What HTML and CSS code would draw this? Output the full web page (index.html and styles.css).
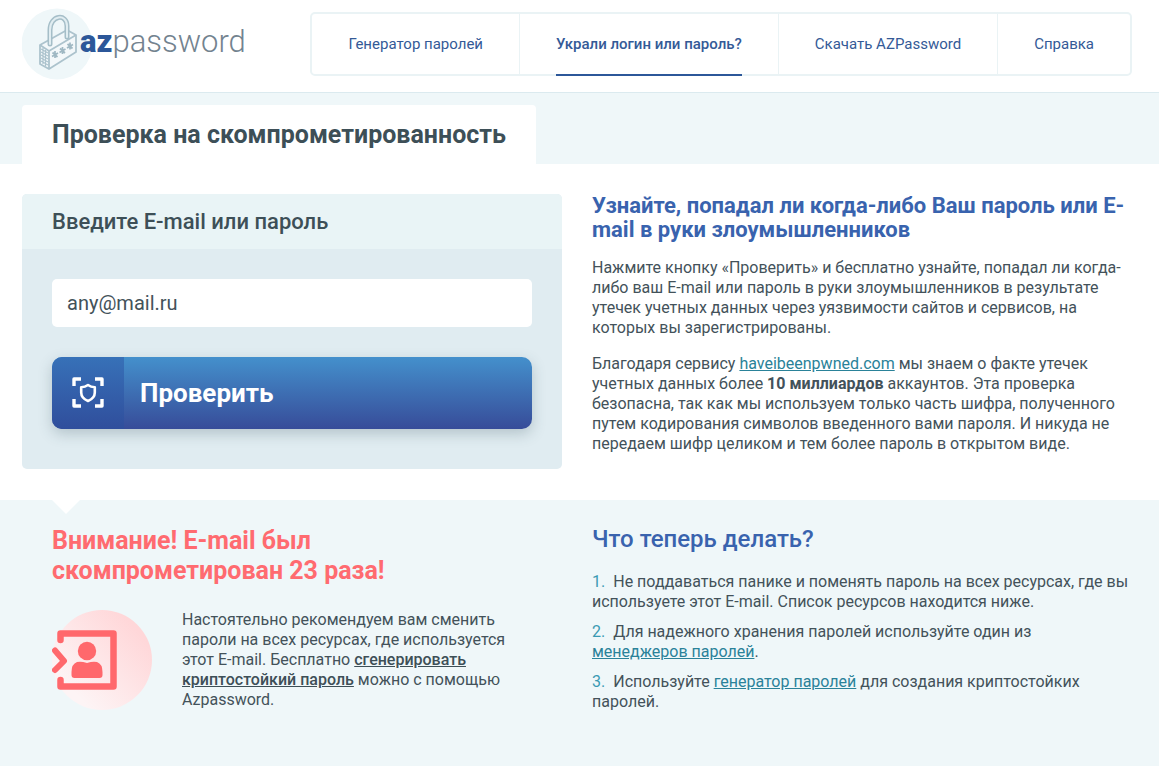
FILE: index.html
```html
<!DOCTYPE html>
<html lang="ru">
<head>
<meta charset="utf-8">
<meta name="viewport" content="width=device-width, initial-scale=1">
<title>AZPassword — проверка на скомпрометированность</title>
<link rel="stylesheet" href="styles.css">
</head>
<body>
<header class="header">
  <div class="container header-row">
    <a class="logo" href="#" aria-label="azpassword">
      <svg class="logo-mark" viewBox="0 0 72 72" aria-hidden="true">
        <circle cx="35" cy="36" r="35.500" fill="#eff7f9"/>
        <path d="M18 37 45 22 54 27 54 44 27 61 18 56Z" fill="#f3f8fa" stroke="#acc3cd" stroke-width="1.800" stroke-linejoin="round"/>
        <path d="M18 37 27 43 54 27M27 43V61" fill="none" stroke="#acc3cd" stroke-width="1.800"/>
        <path d="M19 41 26 45M19 44 26 48M19 47 26 51M19 50 26 54M19 53 26 57M21 40V56M23.500 42V58" stroke="#acc3cd" stroke-width="1.200"/>
        <path d="M28 36V22C28 7 45 5 45 18V29" fill="none" stroke="#a5bec8" stroke-width="5" stroke-linecap="round"/>
        <path d="M28 36V22C28 7 45 5 45 18V29" fill="none" stroke="#e1edf1" stroke-width="2" stroke-linecap="round"/>
        <g stroke="#9fb8c3" stroke-width="1.700">
          <path d="M33 43V50M30 48.500 36 45M30.500 44.500 35.500 49"/>
          <path d="M40.500 39V46M37.500 44.500 43.500 41M38 40.500 43 45"/>
          <path d="M48 34.500V41.500M45 40 51 36.500M45.500 36 50.500 40.500"/>
        </g>
      </svg>
      <span class="logo-text"><b>az</b>password</span>
    </a>
    <nav class="nav">
      <div class="nav-item"><a href="#">Генератор паролей</a></div>
      <div class="nav-item"><a class="current" href="#" aria-current="page">Украли логин или пароль?</a></div>
      <div class="nav-item"><a href="#">Скачать AZPassword</a></div>
      <div class="nav-item"><a href="#">Справка</a></div>
    </nav>
  </div>
</header>
<main>
  <div class="title-band">
    <div class="container"><h1 class="title">Проверка на скомпрометированность</h1></div>
  </div>
  <section class="container columns check">
    <form class="panel">
      <label class="panel-title" for="query">Введите E-mail или пароль</label>
      <div class="panel-body">
        <input class="field" id="query" type="text" value="any@mail.ru">
        <button class="submit" type="button">
          <span class="submit-icon">
            <svg width="32" height="32" viewBox="0 0 32 32" fill="none" stroke="#fff" aria-hidden="true">
              <path d="M2 9V2H9M23 2H30V9M30 22V29H23M9 29H2V22" stroke-width="3.400" stroke-linejoin="round"/>
              <path d="M16 8C14 9.500 11.500 10.200 9.200 10.300V15.500C9.200 19.300 12 22.300 16 24C20 22.300 22.800 19.300 22.800 15.500V10.300C20.500 10.200 18 9.500 16 8Z" stroke-width="2.600" stroke-linejoin="round"/>
            </svg>
          </span>
          <span class="submit-text">Проверить</span>
        </button>
      </div>
    </form>
    <div class="about">
      <h2 class="about-title">Узнайте, попадал ли когда-либо Ваш пароль или E-mail в руки злоумышленников</h2>
      <p>Нажмите кнопку «Проверить» и бесплатно узнайте, попадал ли когда-либо ваш E-mail или пароль в руки злоумышленников в результате утечек учетных данных через уязвимости сайтов и сервисов, на которых вы зарегистрированы.</p>
      <p>Благодаря сервису <a class="link" href="#">haveibeenpwned.com</a> мы знаем о факте утечек учетных данных более <b>10 миллиардов</b> аккаунтов. Эта проверка безопасна, так как мы используем только часть шифра, полученного путем кодирования символов введенного вами пароля. И никуда не передаем шифр целиком и тем более пароль в открытом виде.</p>
    </div>
  </section>
  <section class="result">
    <div class="container columns">
      <div class="warning">
        <h2 class="warning-title">Внимание! E-mail был скомпрометирован 23 раза!</h2>
        <div class="warning-row">
          <svg class="warning-icon" width="102" height="102" viewBox="0 0 102 102" aria-hidden="true">
            <defs><linearGradient id="glow" x1=".2" y1=".8" x2=".85" y2=".2"><stop offset="0" stop-color="#fdf4f5"/><stop offset="1" stop-color="#ffd7d9"/></linearGradient></defs>
            <circle cx="50" cy="50" r="50" fill="url(#glow)"/>
            <g fill="none" stroke="#ff686c" stroke-width="6.500" stroke-linecap="round" stroke-linejoin="round">
              <path d="M8.500 30V23.500H61.500V76.500H8.500V70"/>
              <path d="M3 40.500 12 51 3 60" stroke-width="6"/>
            </g>
            <circle cx="35" cy="41" r="9.200" fill="#ff686c"/>
            <path d="M25 52Q29 51 35 53Q41 51 45 52Q50.500 54 50.500 62V65Q50.500 68 47.500 68H22.500Q19.500 68 19.500 65V62Q19.500 54 25 52Z" fill="#ff686c"/>
          </svg>
          <p>Настоятельно рекомендуем вам сменить пароли на всех ресурсах, где используется этот E-mail. Бесплатно <a class="strong-link" href="#">сгенерировать криптостойкий пароль</a> можно с помощью Azpassword.</p>
        </div>
      </div>
      <div class="advice">
        <h2 class="advice-title">Что теперь делать?</h2>
        <ol class="steps">
          <li>Не поддаваться панике и поменять пароль на всех ресурсах, где вы используете этот E-mail. Список ресурсов находится ниже.</li>
          <li>Для надежного хранения паролей используйте один из <a class="link" href="#">менеджеров паролей</a>.</li>
          <li>Используйте <a class="link" href="#">генератор паролей</a> для создания криптостойких паролей.</li>
        </ol>
      </div>
    </div>
  </section>
</main>
</body>
</html>
```

FILE: styles.css
```css
* { box-sizing: border-box; }
body {
  margin: 0;
  min-height: 100vh;
  display: flex;
  flex-direction: column;
  background: #fff;
  color: #43525a;
  font: 16px/20px Roboto, "Liberation Sans", sans-serif;
}
main { flex: 1; display: flex; flex-direction: column; }
h1, h2, p, ol { margin: 0; }
.container { width: 100%; padding: 0 27px 0 22px; }

.header { border-bottom: 1px solid #dbeaef; }
.header-row { display: flex; justify-content: space-between; align-items: center; padding-top: 8px; padding-bottom: 12px; }
.logo { display: flex; align-items: center; color: #73838f; text-decoration: none; }
.logo-mark { width: 72px; height: 72px; }
.logo-text { margin-left: -14px; padding-bottom: 4px; font-size: 31px; line-height: 40px; font-weight: 300; }
.logo-text b { color: #2c5799; font-weight: 900; }

.nav { display: flex; height: 64px; border: 2px solid #eaf3f5; border-radius: 5px; }
.nav-item { display: flex; padding: 0 36px; border-right: 1px solid #eaf3f5; }
.nav-item:last-child { border-right: 0; }
.nav-item a { margin-bottom: -2px; border-bottom: 2px solid transparent; color: #345a97; font-size: 15px; line-height: 60px; text-decoration: none; }
.nav-item .current { border-color: #2c5799; font-weight: 500; }

.title-band { padding-top: 12px; background: #eff7f9; }
.title { width: fit-content; padding: 10px 30px 9px; border-radius: 4px 4px 0 0; background: #fff; color: #3d4f57; font-size: 25px; line-height: 40px; font-weight: 700; }

.columns { display: grid; grid-template-columns: 1fr 1fr; gap: 30px; }
.check { padding-top: 30px; padding-bottom: 31px; align-items: start; }
.panel { border-radius: 5px; background: #e0ecf1; overflow: hidden; }
.panel-title { display: block; padding: 13px 30px 12px; background: #e9f4f6; color: #3d4f57; font-size: 22px; line-height: 30px; font-weight: 500; }
.panel-body { padding: 30px 30px 40px; }
.field { display: block; width: 100%; height: 48px; padding: 0 15px; border: 0; border-radius: 5px; background: #fff; color: #43525a; font: 20px/24px Roboto, sans-serif; }
.submit { display: flex; width: 100%; height: 72px; margin-top: 30px; padding: 0; border: 0; border-radius: 10px; overflow: hidden; background: linear-gradient(#4490cc, #374c99); box-shadow: 0 5px 14px rgba(50, 80, 90, .25); color: #fff; font: 700 26px/32px Roboto, sans-serif; text-align: left; }
.submit-icon { display: flex; width: 72px; height: 72px; align-items: center; justify-content: center; background: linear-gradient(#3771b8, #304e9c); }
.submit-text { padding: 20px 16px; }

.about-title { color: #3963ae; font-size: 22px; line-height: 24px; font-weight: 700; }
.about p { margin-top: 16px; }
.about b { font-weight: 700; }
.link { color: #2a8299; }

.result { position: relative; flex: 1; padding: 24px 0 52px; background: #eff7f9; }
.result::before { content: ""; position: absolute; left: 52px; top: 0; border: 14px solid transparent; border-top-color: #fff; border-bottom: 0; }
.warning { padding: 2px 30px 0; }
.warning-title { max-width: 400px; color: #ff6b70; font-size: 25px; line-height: 30px; font-weight: 700; }
.warning-row { display: flex; gap: 28px; margin-top: 24px; align-items: flex-start; }
.warning-icon { flex: none; }
.strong-link { color: #3d4f57; font-weight: 500; }
.advice-title { color: #3963ae; font-size: 24px; line-height: 30px; font-weight: 500; }
.steps { display: grid; gap: 10px; margin-top: 18px; padding: 0 3px 0 0; list-style: none; counter-reset: step; }
.steps li::before { counter-increment: step; content: counter(step) "."; margin-right: 8px; color: #3a9ab3; }
```
